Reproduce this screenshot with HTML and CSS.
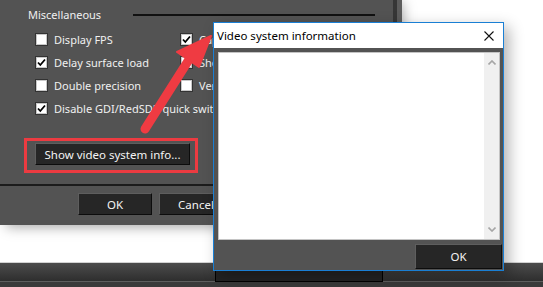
FILE: index.html
```html
<!DOCTYPE html>
<html lang="en">
<head>
    <meta charset="UTF-8">
    <title>Video system information</title>
    <link rel="stylesheet" href="styles.css">
</head>
<body>
    <div class="screen">
        <div class="desktop">
            <div class="settings">
                <div class="group-head">
                    <span>Miscellaneous</span>
                    <span class="rule"></span>
                </div>
                <div class="options">
                    <label class="opt"><span class="box"></span>Display FPS</label>
                    <label class="opt"><span class="box checked"><svg viewBox="0 0 11 11"><path d="M2 5.5 L4.3 8 L9 2.5"/></svg></span>Capture frames</label>
                    <label class="opt"><span class="box checked"><svg viewBox="0 0 11 11"><path d="M2 5.5 L4.3 8 L9 2.5"/></svg></span>Delay surface load</label>
                    <label class="opt"><span class="box"></span>Show statistics</label>
                    <label class="opt"><span class="box"></span>Double precision</label>
                    <label class="opt"><span class="box"></span>Vertical sync</label>
                    <label class="opt wide"><span class="box checked"><svg viewBox="0 0 11 11"><path d="M2 5.5 L4.3 8 L9 2.5"/></svg></span>Disable GDI/RedSDK quick switch</label>
                </div>
                <div class="highlight">
                    <button class="btn info">Show video system info...</button>
                </div>
                <div class="footer">
                    <button class="btn">OK</button>
                    <button class="btn">Cancel</button>
                </div>
            </div>
        </div>
        <div class="taskbar">
            <span class="task"></span>
        </div>

        <div class="popup">
            <div class="titlebar">
                <span>Video system information</span>
                <svg class="close" viewBox="0 0 10 10"><path d="M0.5 0.5 L9.5 9.5 M9.5 0.5 L0.5 9.5"/></svg>
            </div>
            <div class="popup-body">
                <div class="textbox">
                    <div class="scrollbar">
                        <svg viewBox="0 0 8 5"><path d="M0.5 4.5 L4 1 L7.5 4.5"/></svg>
                        <svg viewBox="0 0 8 5"><path d="M0.5 0.5 L4 4 L7.5 0.5"/></svg>
                    </div>
                </div>
                <div class="popup-actions">
                    <button class="btn ok">OK</button>
                </div>
            </div>
        </div>

        <svg class="arrow" viewBox="0 0 543 287">
            <line x1="145" y1="129" x2="190" y2="58"/>
            <polygon points="211,36 177,52 199,67"/>
        </svg>
    </div>
</body>
</html>
```

FILE: styles.css
```css
body {
    margin: 0;
    background: #fff;
    font-family: "Noto Sans", "Segoe UI", sans-serif;
    font-size: 11px;
}
.screen {
    position: relative;
    width: 543px;
    height: 287px;
    overflow: hidden;
}
.desktop {
    height: 262px;
    background: #fff;
}
.settings {
    width: 397px;
    height: 225px;
    box-sizing: border-box;
    padding-top: 8px;
    background: #535353;
    color: #f0f0f0;
    border-right: 4px solid #363636;
    box-shadow: 5px 0 0 #5c5c5c, 6px 2px 12px rgba(0, 0, 0, 0.35);
}
.group-head {
    display: flex;
    align-items: center;
    padding-left: 28px;
    height: 14px;
    line-height: 14px;
}
.rule {
    width: 242px;
    height: 2px;
    background: #111;
    margin-left: 32px;
    margin-top: -1px;
}
.options {
    display: grid;
    grid-template-columns: 145px auto;
    grid-auto-rows: 23px;
    margin-top: 6px;
    padding-left: 35px;
}
.opt {
    display: flex;
    align-items: center;
    gap: 6px;
    white-space: nowrap;
}
.opt.wide {
    grid-column: 1 / 3;
}
.box {
    width: 11px;
    height: 11px;
    background: #fff;
    border: 1px solid #333;
    box-shadow: inset 0 0 0 1px #c8c8c8;
    display: flex;
    flex: none;
}
.box svg {
    width: 11px;
    height: 11px;
    fill: none;
    stroke: #000;
    stroke-width: 1.8;
}
.highlight {
    display: inline-block;
    margin: 18px 0 0 24px;
    border: 3px solid #ec3b41;
    padding: 2px 5px 5px 8px;
}
.btn {
    display: block;
    height: 22px;
    padding: 0;
    background: #262626;
    color: #f4f4f4;
    font-family: inherit;
    font-size: 11.5px;
    border: 1px solid;
    border-color: #5e5e5e #0c0c0c #0c0c0c #5e5e5e;
}
.btn.info {
    width: 155px;
}
.footer {
    margin-top: 11px;
    border-top: 2px solid #1c1c1c;
    padding: 7px 0 0 78px;
    display: flex;
    gap: 7px;
}
.footer .btn {
    width: 74px;
}
.taskbar {
    height: 25px;
    border-top: 1px solid #d2d2d2;
    box-sizing: border-box;
    background: linear-gradient(#4c4c4c, #2e2e2e 18px, #5e5e5e 18px, #5e5e5e 19px, #3a3a3a 19px);
    padding-top: 1px;
}
.task {
    display: block;
    margin-left: 215px;
    width: 166px;
    height: 16px;
    background: #232323;
    border: 1px solid #000;
}
.popup {
    position: absolute;
    left: 213px;
    top: 22px;
    width: 291px;
    height: 249px;
    box-sizing: border-box;
    border: 1px solid #1a7fd4;
    background: #535353;
    box-shadow: 5px 5px 14px rgba(0, 0, 0, 0.3);
    display: flex;
    flex-direction: column;
}
.titlebar {
    height: 25px;
    background: #fff;
    color: #000;
    font-size: 11.5px;
    display: flex;
    align-items: center;
    justify-content: space-between;
    padding: 0 9px 0 3px;
}
.close {
    width: 10px;
    height: 10px;
    fill: none;
    stroke: #111;
    stroke-width: 1.1;
}
.popup-body {
    flex: 1;
    padding: 4px 3px 0 4px;
    display: flex;
    flex-direction: column;
}
.textbox {
    height: 188px;
    box-sizing: border-box;
    background: #fff;
    border: 1px solid #c4c4c4;
    display: flex;
    justify-content: flex-end;
}
.scrollbar {
    width: 15px;
    background: #f0f0f0;
    display: flex;
    flex-direction: column;
    justify-content: space-between;
    align-items: center;
    padding: 7px 0;
}
.scrollbar svg {
    width: 8px;
    height: 5px;
    fill: none;
    stroke: #a6a6a6;
    stroke-width: 1.6;
}
.popup-actions {
    display: flex;
    justify-content: flex-end;
    margin-top: 4px;
    margin-right: -2px;
}
.btn.ok {
    width: 87px;
    height: 25px;
}
.arrow {
    position: absolute;
    left: 0;
    top: 0;
    width: 543px;
    height: 287px;
    pointer-events: none;
}
.arrow line {
    stroke: #ef3b42;
    stroke-width: 9;
    stroke-linecap: round;
}
.arrow polygon {
    fill: #ef3b42;
    stroke: #ef3b42;
    stroke-width: 2;
    stroke-linejoin: round;
}
```
